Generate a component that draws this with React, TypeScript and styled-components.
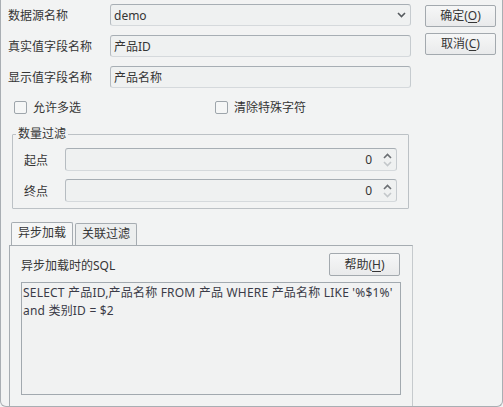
import React from "react";
import styled, { createGlobalStyle } from "styled-components";

const GlobalStyle = createGlobalStyle`
  html, body {
    margin: 0;
    padding: 0;
    background: #f2f3f3;
  }
  body {
    font-family: "Noto Sans", "Noto Sans CJK SC", sans-serif;
    font-size: 12px;
    color: #353535;
  }
  * {
    box-sizing: border-box;
  }
`;

const Window = styled.div`
  width: 503px;
  height: 407px;
  border: 1px solid #a9aeb3;
  border-top: none;
  border-radius: 0 0 6px 6px;
  background: #f2f3f3;
  padding-left: 7px;
  display: flex;
  overflow: hidden;
`;

const MainColumn = styled.div`
  width: 404px;
  display: flex;
  flex-direction: column;
`;

const ButtonColumn = styled.div`
  margin-left: 13px;
  padding-top: 5px;
  width: 71px;
  display: flex;
  flex-direction: column;
  gap: 6px;
`;

const Button = styled.button<{ $h?: number }>`
  width: 71px;
  height: ${(p) => p.$h ?? 22}px;
  border: 1px solid #a3a9ae;
  border-radius: 2px;
  background: linear-gradient(#f6f7f7, #e9eaeb);
  font: inherit;
  color: #353535;
  padding: 0;
  line-height: 18px;
  u {
    text-decoration-thickness: 1px;
    text-underline-offset: 2px;
  }
`;

const FormRows = styled.div`
  padding-top: 4px;
  display: flex;
  flex-direction: column;
  gap: 9px;
`;

const Row = styled.div`
  display: flex;
  align-items: center;
`;

const Label = styled.span<{ $w: number }>`
  width: ${(p) => p.$w}px;
  white-space: nowrap;
`;

const Field = styled.div<{ $w: number; $h?: number }>`
  width: ${(p) => p.$w}px;
  height: ${(p) => p.$h ?? 22}px;
  border: 1px solid;
  border-color: #a7aeb4 #c6cbcf #d5d9dc #b6bcc1;
  border-radius: 3px;
  background: #eff1f1;
  display: flex;
  align-items: center;
  padding-left: 3px;
`;

const FieldText = styled.span`
  flex: 1;
`;

const CheckRow = styled.div`
  margin-top: 13px;
  padding-left: 6px;
  display: grid;
  grid-template-columns: 201px auto;
  height: 13px;
`;

const CheckItem = styled.label`
  display: flex;
  align-items: center;
  gap: 6px;
  line-height: 13px;
`;

const Box = styled.span`
  width: 13px;
  height: 13px;
  border: 1px solid #9ea5ab;
  border-radius: 2px;
  background: #f5f6f6;
`;

const Group = styled.fieldset`
  margin: 12px 0 0 4px;
  width: 397px;
  border: 1px solid #bcc1c5;
  border-radius: 1px;
  padding: 6px 11px 6px 11px;
  display: flex;
  flex-direction: column;
  gap: 8px;
`;

const Legend = styled.legend`
  padding: 0 2px;
  margin-left: -8px;
  line-height: 16px;
`;

const SpinValue = styled.span`
  flex: 1;
  text-align: right;
  padding-right: 11px;
`;

const SpinArrows = styled.span`
  width: 9px;
  margin-right: 4px;
  display: flex;
  flex-direction: column;
  gap: 2px;
`;

const TabStrip = styled.div`
  margin: 13px 0 0 3px;
  display: flex;
  align-items: flex-end;
  gap: 2px;
  height: 23px;
`;

const Tab = styled.div<{ $active?: boolean }>`
  width: 62px;
  height: ${(p) => (p.$active ? 23 : 22)}px;
  border: 1px solid #a6acb1;
  border-bottom: none;
  border-radius: 2px 2px 0 0;
  background: ${(p) => (p.$active ? "#f5f6f6" : "#eceeee")};
  padding-left: 6px;
  line-height: 20px;
`;

const Panel = styled.div`
  flex: 1;
  margin-left: 1px;
  width: 404px;
  border: 1px solid #a6acb1;
  border-bottom: none;
  border-right-color: #c6cacd;
  padding: 7px 11px 0 11px;
  display: flex;
  flex-direction: column;
`;

const PanelHeader = styled.div`
  display: flex;
  align-items: center;
  justify-content: space-between;
  padding-right: 1px;
`;

const SqlBox = styled.div`
  margin-top: 6px;
  width: 380px;
  height: 113px;
  border: 1px solid #a2a9af;
  background: #f1f2f2;
  padding: 1px 1px;
  line-height: 18px;
  letter-spacing: 0.2px;
  color: #3a3b47;
  white-space: pre-wrap;
`;

const Chevron = ({ color, up }: { color: string; up?: boolean }) => (
  <svg width="9" height="6" viewBox="0 0 9 6">
    <path
      d={up ? "M1 5 L4.5 1.5 L8 5" : "M1 1 L4.5 4.5 L8 1"}
      fill="none"
      stroke={color}
      strokeWidth="1.6"
    />
  </svg>
);

const SelectArrow = styled.span`
  margin-right: 4px;
  display: flex;
`;

const Spin = ({ value }: { value: string }) => (
  <Field $w={332} $h={23}>
    <SpinValue>{value}</SpinValue>
    <SpinArrows>
      <Chevron color="#6b6f73" up />
      <Chevron color="#c3c7ca" />
    </SpinArrows>
  </Field>
);

export default function App() {
  return (
    <>
      <GlobalStyle />
      <Window>
        <MainColumn>
          <FormRows>
            <Row>
              <Label $w={102}>数据源名称</Label>
              <Field $w={301}>
                <FieldText>demo</FieldText>
                <SelectArrow>
                  <Chevron color="#555a5e" />
                </SelectArrow>
              </Field>
            </Row>
            <Row>
              <Label $w={102}>真实值字段名称</Label>
              <Field $w={301}>
                <FieldText>产品ID</FieldText>
              </Field>
            </Row>
            <Row>
              <Label $w={102}>显示值字段名称</Label>
              <Field $w={301}>
                <FieldText>产品名称</FieldText>
              </Field>
            </Row>
          </FormRows>

          <CheckRow>
            <CheckItem>
              <Box />
              允许多选
            </CheckItem>
            <CheckItem>
              <Box />
              清除特殊字符
            </CheckItem>
          </CheckRow>

          <Group>
            <Legend>数量过滤</Legend>
            <Row>
              <Label $w={41}>起点</Label>
              <Spin value="0" />
            </Row>
            <Row>
              <Label $w={41}>终点</Label>
              <Spin value="0" />
            </Row>
          </Group>

          <TabStrip>
            <Tab $active>异步加载</Tab>
            <Tab>关联过滤</Tab>
          </TabStrip>
          <Panel>
            <PanelHeader>
              <span>异步加载时的SQL</span>
              <Button $h={23}>
                帮助(<u>H</u>)
              </Button>
            </PanelHeader>
            <SqlBox>
              {"SELECT 产品ID,产品名称 FROM 产品 WHERE 产品名称 LIKE '%$1%'\nand 类别ID = $2"}
            </SqlBox>
          </Panel>
        </MainColumn>

        <ButtonColumn>
          <Button>
            确定(<u>O</u>)
          </Button>
          <Button>
            取消(<u>C</u>)
          </Button>
        </ButtonColumn>
      </Window>
    </>
  );
}
